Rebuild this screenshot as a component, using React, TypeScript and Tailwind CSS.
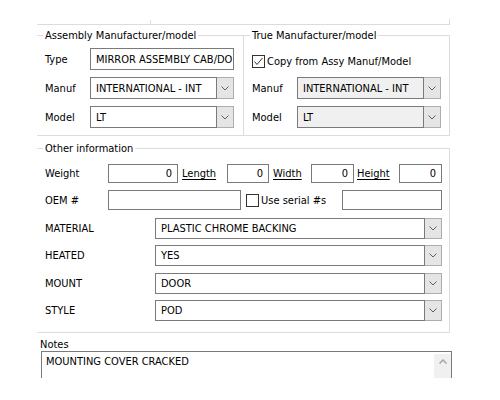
const Chevron = () => (
  <svg width="8" height="5" viewBox="0 0 8 5" fill="none">
    <polyline points="0.5,0.5 4,4 7.5,0.5" stroke="#606060" strokeWidth="1" />
  </svg>
);

const Combo = ({ value, disabled = false, className }: { value: string; disabled?: boolean; className: string }) => (
  <div className={`flex ${className}`}>
    <div
      className={`flex-1 flex items-center border border-[#7a7a7a] pl-[5px] whitespace-nowrap overflow-hidden ${
        disabled ? 'bg-[#f0f0f0]' : 'bg-white'
      }`}
    >
      {value}
    </div>
    <div className="w-[17px] flex items-center justify-center bg-[#e5e5e5] border-y border-r border-[#adadad]">
      <Chevron />
    </div>
  </div>
);

const TextBox = ({ value = '', className }: { value?: string; className: string }) => (
  <div className={`flex items-center border border-[#7a7a7a] bg-white whitespace-nowrap overflow-hidden ${className}`}>
    {value}
  </div>
);

const CheckBox = ({ checked = false }: { checked?: boolean }) => (
  <div className="w-[13px] h-[13px] border border-[#333333] bg-white flex items-center justify-center">
    {checked && (
      <svg width="11" height="11" viewBox="0 0 11 11" fill="none">
        <polyline points="1.5,5.5 4,8.5 9.5,2" stroke="#333333" strokeWidth="1" />
      </svg>
    )}
  </div>
);

const Link = ({ children, className }: { children: string; className: string }) => (
  <span className={`underline underline-offset-2 ${className}`}>{children}</span>
);

export default function App() {
  return (
    <div className="w-[500px] h-[400px] bg-white overflow-hidden font-['DejaVu_Sans_Condensed',_'DejaVu_Sans',_sans-serif] text-[11px] leading-[13px] text-black">
      <div className="ml-[37px] w-[413px]">
        {/* tab strip edge */}
        <div className="relative mt-[24px] h-px bg-[#dcdcdc]">
          <div className="absolute left-[113px] -top-[4px] w-px h-[4px] bg-[#dcdcdc]" />
          <div className="absolute right-0 -top-[5px] w-px h-[5px] bg-[#dcdcdc]" />
        </div>

        <div className="flex mt-[4px]">
          <fieldset className="w-[207px] border-t border-r border-b border-[#dcdcdc] pl-[8px] pt-[6px] pb-[7px]">
            <legend className="px-[2px] -ml-[2px]">Assembly Manufacturer/model</legend>
            <div className="grid grid-cols-[45px_144px] gap-y-[7px] items-center">
              <span>Type</span>
              <TextBox value="MIRROR ASSEMBLY CAB/DO" className="h-[22px] pl-[5px]" />
              <span>Manuf</span>
              <Combo value="INTERNATIONAL - INT" className="h-[22px]" />
              <span>Model</span>
              <Combo value="LT" className="h-[22px]" />
            </div>
          </fieldset>

          <fieldset className="w-[206px] border-t border-r border-b border-[#dcdcdc] pl-[8px] pt-[6px] pb-[7px]">
            <legend className="px-[2px] -ml-[2px]">True Manufacturer/model</legend>
            <div className="flex items-center gap-[2px] h-[22px] pt-[4px]">
              <CheckBox checked />
              <span>Copy from Assy Manuf/Model</span>
            </div>
            <div className="grid grid-cols-[45px_144px] gap-y-[7px] items-center mt-[7px]">
              <span>Manuf</span>
              <Combo value="INTERNATIONAL - INT" disabled className="h-[22px]" />
              <span>Model</span>
              <Combo value="LT" disabled className="h-[22px]" />
            </div>
          </fieldset>
        </div>

        <fieldset className="mt-[6px] w-[413px] border-t border-r border-b border-[#dcdcdc] pl-[8px] pt-[9px] pb-[11px]">
          <legend className="px-[2px] -ml-[2px]">Other information</legend>
          <div className="flex items-center h-[19px]">
            <span className="w-[63px]">Weight</span>
            <TextBox value="0" className="w-[70px] h-[19px] justify-end pr-[5px]" />
            <Link className="w-[49px] pl-[4px]">Length</Link>
            <TextBox value="0" className="w-[42px] h-[19px] justify-end pr-[5px]" />
            <Link className="w-[42px] pl-[4px]">Width</Link>
            <TextBox value="0" className="w-[43px] h-[19px] justify-end pr-[5px]" />
            <Link className="w-[45px] pl-[3px]">Height</Link>
            <TextBox value="0" className="w-[43px] h-[19px] justify-end pr-[5px]" />
          </div>

          <div className="flex items-center h-[20px] mt-[7px]">
            <span className="w-[63px]">OEM #</span>
            <TextBox className="w-[133px] h-[20px]" />
            <div className="ml-[5px] mr-[2px]">
              <CheckBox />
            </div>
            <span className="w-[81px]">Use serial #s</span>
            <TextBox className="w-[100px] h-[20px]" />
          </div>

          <div className="flex items-center mt-[8px]">
            <span className="w-[110px]">MATERIAL</span>
            <Combo value="PLASTIC CHROME BACKING" className="w-[287px] h-[21px]" />
          </div>
          <div className="flex items-center mt-[6px]">
            <span className="w-[110px]">HEATED</span>
            <Combo value="YES" className="w-[287px] h-[21px]" />
          </div>
          <div className="flex items-center mt-[7px]">
            <span className="w-[110px]">MOUNT</span>
            <Combo value="DOOR" className="w-[287px] h-[21px]" />
          </div>
          <div className="flex items-center mt-[6px]">
            <span className="w-[110px]">STYLE</span>
            <Combo value="POD" className="w-[287px] h-[21px]" />
          </div>
        </fieldset>

        <div className="ml-[3px] mt-[6px]">
          <div className="leading-[12px]">Notes</div>
          <div className="ml-px w-[411px] h-[27px] flex border-t border-l border-r border-[#7a7a7a]">
            <div className="flex-1 pl-[4px] pt-[3px]">MOUNTING COVER CRACKED</div>
            <div className="w-[17px] mt-[2px] bg-[#f0f0f0] flex justify-center pt-[5px]">
              <svg width="8" height="5" viewBox="0 0 8 5" fill="none">
                <polyline points="0.5,4.5 4,1 7.5,4.5" stroke="#a6a6a6" strokeWidth="1.5" />
              </svg>
            </div>
          </div>
        </div>
      </div>
    </div>
  );
}
